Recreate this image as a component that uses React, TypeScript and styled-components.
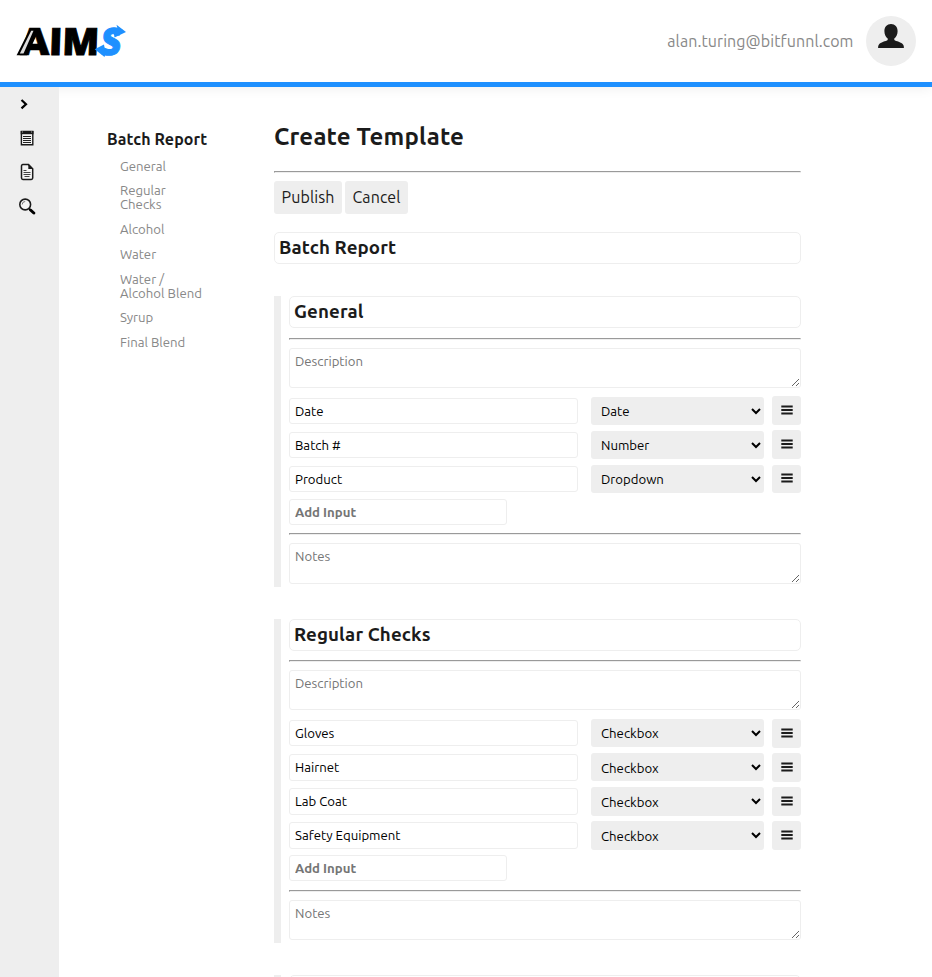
import React from 'react';
import styled, { createGlobalStyle } from 'styled-components';

const GlobalStyle = createGlobalStyle`
  *, *::before, *::after { box-sizing: border-box; }
  html, body { margin: 0; height: 100%; overflow: hidden; }
  body, input, select, textarea, button {
    font-family: Ubuntu, "Noto Sans", sans-serif;
  }
  body { background: #fff; color: #1b1b1b; font-size: 16px; }
`;

const Page = styled.div`
  display: flex;
  flex-direction: column;
  height: 977px;
  overflow: hidden;
`;

const Header = styled.header`
  display: flex;
  flex: none;
  align-items: center;
  justify-content: space-between;
  height: 87px;
  padding: 0 16px;
  border-bottom: 5px solid #1e90ff;
  background: #fff;
  box-shadow: 0 1px 12px rgba(0, 0, 0, 0.07);
`;

const Account = styled.div`
  display: flex;
  align-items: center;
  gap: 12.5px;
  color: #888;
  letter-spacing: 0.08px;
`;

const Avatar = styled.div`
  display: flex;
  justify-content: center;
  width: 50px;
  height: 50px;
  padding-top: 8px;
  border-radius: 50%;
  background: #eee;
  color: #1b1b1b;
`;

const Body = styled.div`
  display: flex;
  flex: 1;
  min-height: 0;
`;

const Rail = styled.nav`
  display: flex;
  flex: none;
  flex-direction: column;
  width: 59px;
  background: #eee;
`;

const RailItem = styled.a`
  display: flex;
  align-items: center;
  height: 34px;
  padding-left: 18px;
`;

const Outline = styled.nav`
  flex: none;
  width: 110px;
  margin: 41px 0 0 48px;
`;

const OutlineTitle = styled.div`
  margin-bottom: 8.8px;
  font-weight: 700;
  line-height: 22px;
  letter-spacing: 0.1px;
`;

const OutlineList = styled.ul`
  margin: 0;
  padding: 0 0 0 13px;
  list-style: none;
  font-size: 13.2px;
  line-height: 14px;
  color: #888;
`;

const OutlineItem = styled.li`
  margin-bottom: 10.7px;
  white-space: pre-line;
`;

const Main = styled.main`
  flex: none;
  width: 527px;
  margin-left: 57px;
`;

const Title = styled.h1`
  height: 84px;
  margin: 0;
  padding-top: 35px;
  font-size: 24px;
  line-height: 30px;
  letter-spacing: 0.18px;
`;

const Rule = styled.hr`
  height: 2px;
  margin: 0;
  border: 1px solid;
  border-color: #9a9a9a #eee #eee #9a9a9a;
`;

const Actions = styled.div`
  display: flex;
  gap: 3px;
  margin-top: 8px;
`;

const ActionButton = styled.button<{ $width: number }>`
  width: ${(p) => p.$width}px;
  height: 33px;
  padding: 0 0 2px;
  border: 0;
  border-radius: 3px;
  background: #eee;
  color: #1b1b1b;
  font-size: 16px;
  letter-spacing: 0.08px;
`;

const HeadingInput = styled.input`
  display: block;
  width: 100%;
  height: 32px;
  margin: 0;
  padding: 0 4px 1.3px;
  border: 1px solid #eee;
  border-radius: 5px;
  background: #fff;
  color: #1b1b1b;
  font-size: 18.72px;
  font-weight: 700;
  letter-spacing: 0.12px;
`;

const TemplateName = styled.div`
  margin: 18px 0 32.4px;
`;

const Section = styled.section`
  margin-bottom: 32px;
  padding: 0 0 3px 8px;
  border-left: 7px solid #eee;
`;

const SectionRule = styled(Rule)<{ $tight?: boolean }>`
  margin: ${(p) => (p.$tight ? '8.2px' : '9.7px')} 0 8px;
`;

const Note = styled.textarea<{ $height: number }>`
  display: block;
  width: 100%;
  height: ${(p) => p.$height}px;
  margin: 0;
  padding: 3px 5px;
  border: 1px solid #eee;
  border-radius: 3px;
  font-size: 13.2px;
  line-height: 18px;
  overflow: hidden;
  resize: both;
  &::placeholder { color: #757575; }
`;

const Rows = styled.div`
  margin-top: 8.25px;
`;

const FieldRow = styled.div`
  display: grid;
  grid-template-columns: 302px 181px 29px;
  align-items: start;
  height: 34.1px;
`;

const TextInput = styled.input<{ $add?: boolean }>`
  display: block;
  width: ${(p) => (p.$add ? '218px' : '289px')};
  height: 26.4px;
  margin: ${(p) => (p.$add ? '0' : '1.3px 0 0')};
  padding: 0 5px;
  border: 1px solid #eee;
  border-radius: 3px;
  background: #fff;
  color: #000;
  font-size: 13.2px;
  font-weight: ${(p) => (p.$add ? 700 : 400)};
  &::placeholder { color: #757575; }
`;

const TypeSelect = styled.select`
  width: 172.6px;
  height: 28.3px;
  margin: 0.3px 0 0;
  padding: 0.5px 6px 0;
  border: 0;
  border-radius: 3px;
  background-color: #eee;
  color: #000;
  font-size: 13.2px;
`;

const MenuButton = styled.button`
  display: flex;
  align-items: center;
  justify-content: center;
  width: 29px;
  height: 28.8px;
  padding: 0 0 1px;
  border: 0;
  border-radius: 3px;
  background: #eee;
`;

const LogoLetters = styled.text`
  font-family: "Open Sans", sans-serif;
  font-size: 37.5px;
  font-weight: 800;
`;

function Logo() {
  return (
    <svg width="116" height="66" viewBox="0 -16 116 66" aria-label="AIMS">
      <LogoLetters x="4" y="31.2" textLength="29.5" lengthAdjust="spacingAndGlyphs" stroke="#000" strokeWidth=".5">A</LogoLetters>
      <path d="M.6 31.2 14.200 4.200H24L11 31.200Z" fill="#000" />
      <path d="M3.800 29.500 15.200 6.800H17.500L7.500 29.500Z" fill="#ddd" />
      <LogoLetters transform="translate(32.800 31.200) skewX(-2)" textLength="50" lengthAdjust="spacingAndGlyphs" stroke="#000" strokeWidth="1">IM</LogoLetters>
      <LogoLetters transform="translate(84 31) skewX(-6)" textLength="20" lengthAdjust="spacingAndGlyphs" fill="#1e90ff" stroke="#1e90ff" strokeWidth="1">S</LogoLetters>
      <path d="M100.500.8 110 8 98.500 13.500 97 4.500H101.500Z" fill="#1e90ff" />
      <path d="M88 20.500 78.700 25.300 88.500 33 89.500 29.500Z" fill="#1e90ff" />
    </svg>
  );
}

function PersonIcon() {
  return (
    <svg width="26" height="25" viewBox="0 0 26 25">
      <path d="M13 0c4 0 6.600 3 6.600 7.200 0 3.100-1.300 6-3.300 7.400v1.500c1.500 1.300 7.400 2.100 8.900 4.600.6 1 .7 2 .7 3.300H.1c0-1.300.1-2.300.7-3.300 1.500-2.500 7.400-3.300 8.900-4.600v-1.500C7.700 13.200 6.400 10.300 6.400 7.200 6.400 3 9 0 13 0Z" fill="#1b1b1b" />
    </svg>
  );
}

function ChevronIcon() {
  return (
    <svg width="12" height="12" viewBox="0 0 12 12">
      <path d="M3.500 2 8 6.200 3.500 10.400" fill="none" stroke="#000" strokeWidth="2.200" />
    </svg>
  );
}

function ClipboardIcon() {
  return (
    <svg width="18" height="18" viewBox="0 0 18 18">
      <path d="M3.400 2.500h11.400v13.200H3.400Z" fill="#f4f4f4" stroke="#1b1b1b" strokeWidth="1.400" />
      <path d="M2.700 2h12.800v3.200H2.700Z" fill="#1b1b1b" />
      <path d="M5 7.500h8M5 9.500h8M5 11.500h8M5 13.500h8" stroke="#222" strokeWidth="1.100" />
      <path d="M4 3h1M13 3h1" stroke="#aaa" />
    </svg>
  );
}

function DocumentIcon() {
  return (
    <svg width="18" height="18" viewBox="0 0 18 18">
      <path d="M3.500 3q0-1.400 1.400-1.400h5.600l4.200 4.200v9.300q0 1.400-1.400 1.400H4.900q-1.400 0-1.400-1.400Z" fill="#f4f4f4" stroke="#1b1b1b" strokeWidth="1.500" />
      <path d="M10.300 1.500v4.500h4.500Z" fill="#1b1b1b" />
      <path d="M5.500 7.500h3M5.500 9.500h7M5.500 11.500h7M6.500 13.500h5" stroke="#444" strokeWidth="1.100" />
    </svg>
  );
}

function SearchIcon() {
  return (
    <svg width="18" height="18" viewBox="0 -.5 18 18">
      <circle cx="7.200" cy="7" r="5.400" fill="#f4f4f4" stroke="#1b1b1b" strokeWidth="1.600" />
      <path d="M4.200 7a3 3 0 0 1 3-3" fill="none" stroke="#777" />
      <path d="m11 11 1.500 1.500" stroke="#1b1b1b" strokeWidth="1.500" />
      <path d="m12.500 12.500 3.300 3" stroke="#000" strokeWidth="3" strokeLinecap="round" />
    </svg>
  );
}

function BarsIcon() {
  return (
    <svg width="12" height="10" viewBox="0 0 12 10">
      <path d="M.3 1.500h11.400M.3 5h11.400M.3 8.500h11.400" stroke="#1b1b1b" strokeWidth="2" />
    </svg>
  );
}

const outline = ['General', 'Regular\nChecks', 'Alcohol', 'Water', 'Water /\nAlcohol Blend', 'Syrup', 'Final Blend'];

const inputTypes = ['Date', 'Number', 'Dropdown', 'Checkbox'];

const sections = [
  {
    name: 'General',
    fields: [
      { label: 'Date', type: 'Date' },
      { label: 'Batch #', type: 'Number' },
      { label: 'Product', type: 'Dropdown' },
    ],
  },
  {
    name: 'Regular Checks',
    fields: [
      { label: 'Gloves', type: 'Checkbox' },
      { label: 'Hairnet', type: 'Checkbox' },
      { label: 'Lab Coat', type: 'Checkbox' },
      { label: 'Safety Equipment', type: 'Checkbox' },
    ],
  },
  { name: 'Alcohol', fields: [] as { label: string; type: string }[] },
];

export default function App() {
  return (
    <Page>
      <GlobalStyle />
      <Header>
        <Logo />
        <Account>
          alan.turing@bitfunnl.com
          <Avatar><PersonIcon /></Avatar>
        </Account>
      </Header>
      <Body>
        <Rail>
          <RailItem><ChevronIcon /></RailItem>
          <RailItem><ClipboardIcon /></RailItem>
          <RailItem><DocumentIcon /></RailItem>
          <RailItem><SearchIcon /></RailItem>
        </Rail>
        <Outline>
          <OutlineTitle>Batch Report</OutlineTitle>
          <OutlineList>
            {outline.map((item) => <OutlineItem key={item}>{item}</OutlineItem>)}
          </OutlineList>
        </Outline>
        <Main>
          <Title>Create Template</Title>
          <Rule />
          <Actions>
            <ActionButton $width={68}>Publish</ActionButton>
            <ActionButton $width={63}>Cancel</ActionButton>
          </Actions>
          <TemplateName><HeadingInput defaultValue="Batch Report" /></TemplateName>
          {sections.map((section) => (
            <Section key={section.name}>
              <HeadingInput defaultValue={section.name} />
              <SectionRule />
              <Note $height={40} placeholder="Description" />
              <Rows>
                {section.fields.map((field) => (
                  <FieldRow key={field.label}>
                    <TextInput defaultValue={field.label} />
                    <TypeSelect defaultValue={field.type}>
                      {inputTypes.map((type) => <option key={type}>{type}</option>)}
                    </TypeSelect>
                    <MenuButton><BarsIcon /></MenuButton>
                  </FieldRow>
                ))}
              </Rows>
              <TextInput $add placeholder="Add Input" />
              <SectionRule $tight />
              <Note $height={40.6} placeholder="Notes" />
            </Section>
          ))}
        </Main>
      </Body>
    </Page>
  );
}
